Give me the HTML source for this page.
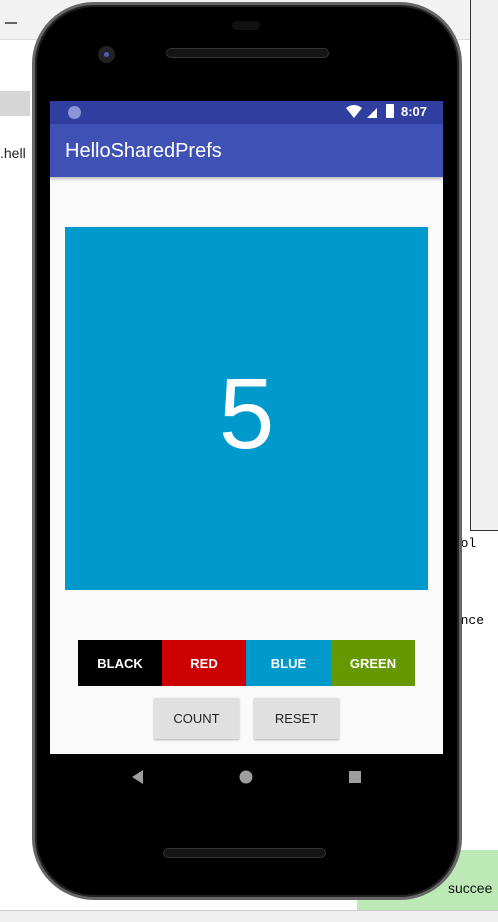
<!DOCTYPE html>
<html><head><style>
*{margin:0;padding:0;box-sizing:border-box}
body{width:498px;height:922px;overflow:hidden;background:#fff;position:relative;font-family:"Liberation Sans",sans-serif}
.a{position:absolute}
.btn{position:absolute;color:#fff;font-size:13px;font-weight:bold;display:flex;align-items:center;justify-content:center}
.gb{position:absolute;background:#e0e0e0;color:#222;font-size:13px;display:flex;align-items:center;justify-content:center;box-shadow:0 1px 2px rgba(0,0,0,.3)}
</style></head><body>
<div class="a" style="left:0;top:0;width:498px;height:40px;background:#f2f2f2;border-bottom:1px solid #ddd"></div>
<div class="a" style="left:5px;top:22px;width:12px;height:2px;background:#666"></div>
<div class="a" style="left:0;top:91px;width:30px;height:25px;background:#d6d6d6"></div>
<div class="a" style="left:0;top:145px;font-size:14px;color:#222;z-index:1">.hell</div>
<div class="a" style="left:0;top:910px;width:498px;height:12px;background:#f0f0f0;border-top:1px solid #ccc"></div>
<div class="a" style="left:445px;top:536px;font-family:'Liberation Mono',monospace;font-size:13px;color:#000">dCol</div>
<div class="a" style="left:445px;top:613px;font-family:'Liberation Mono',monospace;font-size:13px;color:#000">rence</div>
<div class="a" style="left:470px;top:0;width:28px;height:531px;background:#f0f0f0;border-left:1px solid #333;border-bottom:1px solid #333"></div>
<div class="a" style="left:357px;top:850px;width:141px;height:60px;background:#bde9b7"></div>
<div class="a" style="left:448px;top:880px;font-size:14px;color:#111">succee</div>
<div class="a" style="left:32px;top:2px;width:430px;height:898px;background:#000;border-radius:62px;border:3px solid #666;box-shadow:inset 0 0 0 2px #222"></div>
<div class="a" style="left:166px;top:48px;width:163px;height:10px;border-radius:5px;background:#151515;border:1px solid #333"></div>
<div class="a" style="left:232px;top:21px;width:28px;height:9px;border-radius:5px;background:#111"></div>
<div class="a" style="left:98px;top:46px;width:17px;height:17px;border-radius:50%;background:#222"></div>
<div class="a" style="left:104px;top:52px;width:5px;height:5px;border-radius:50%;background:#4a5fb0"></div>
<div class="a" style="left:163px;top:848px;width:163px;height:10px;border-radius:5px;background:#151515;border:1px solid #333"></div>
<div class="a" style="left:50px;top:101px;width:393px;height:653px;background:#fafafa"></div>
<div class="a" style="left:50px;top:101px;width:393px;height:23px;background:#303f9f"></div>
<div class="a" style="left:68px;top:106px;width:13px;height:13px;border-radius:50%;background:#8c95d6"></div>
<div class="a" style="left:386px;top:104px;width:8px;height:14px;background:#fff;border-radius:1px"></div>
<svg class="a" style="left:345px;top:104px" width="40" height="16"><path d="M1 4 Q9 -2 17 4 L9 14Z" fill="#fff"/><path d="M22 14 L32 4 L32 14Z" fill="#fff"/></svg>
<div class="a" style="left:401px;top:104px;color:#fff;font-size:13px;font-weight:bold">8:07</div>
<div class="a" style="left:50px;top:124px;width:393px;height:53px;background:#3f51b5;box-shadow:0 2px 3px rgba(0,0,0,.25)"></div>
<div class="a" style="left:65px;top:140px;color:#fff;font-size:20px">HelloSharedPrefs</div>
<div class="a" style="left:65px;top:227px;width:363px;height:363px;background:#0099cc;color:#fff;font-size:100px;display:flex;align-items:center;justify-content:center;padding-top:12px">5</div>
<div class="btn" style="left:78px;top:640px;width:84px;height:46px;background:#000">BLACK</div>
<div class="btn" style="left:162px;top:640px;width:84px;height:46px;background:#cc0000">RED</div>
<div class="btn" style="left:246px;top:640px;width:85px;height:46px;background:#0099cc">BLUE</div>
<div class="btn" style="left:331px;top:640px;width:84px;height:46px;background:#669900">GREEN</div>
<div class="gb" style="left:154px;top:698px;width:85px;height:41px">COUNT</div>
<div class="gb" style="left:254px;top:698px;width:85px;height:41px">RESET</div>
<svg class="a" style="left:130px;top:768px" width="240" height="18"><path d="M2 9 L13 2 L13 16Z" fill="#9e9e9e"/><circle cx="116" cy="9" r="6.5" fill="#9e9e9e"/><rect x="219" y="3" width="12" height="12" fill="#9e9e9e"/></svg>
</body></html>
